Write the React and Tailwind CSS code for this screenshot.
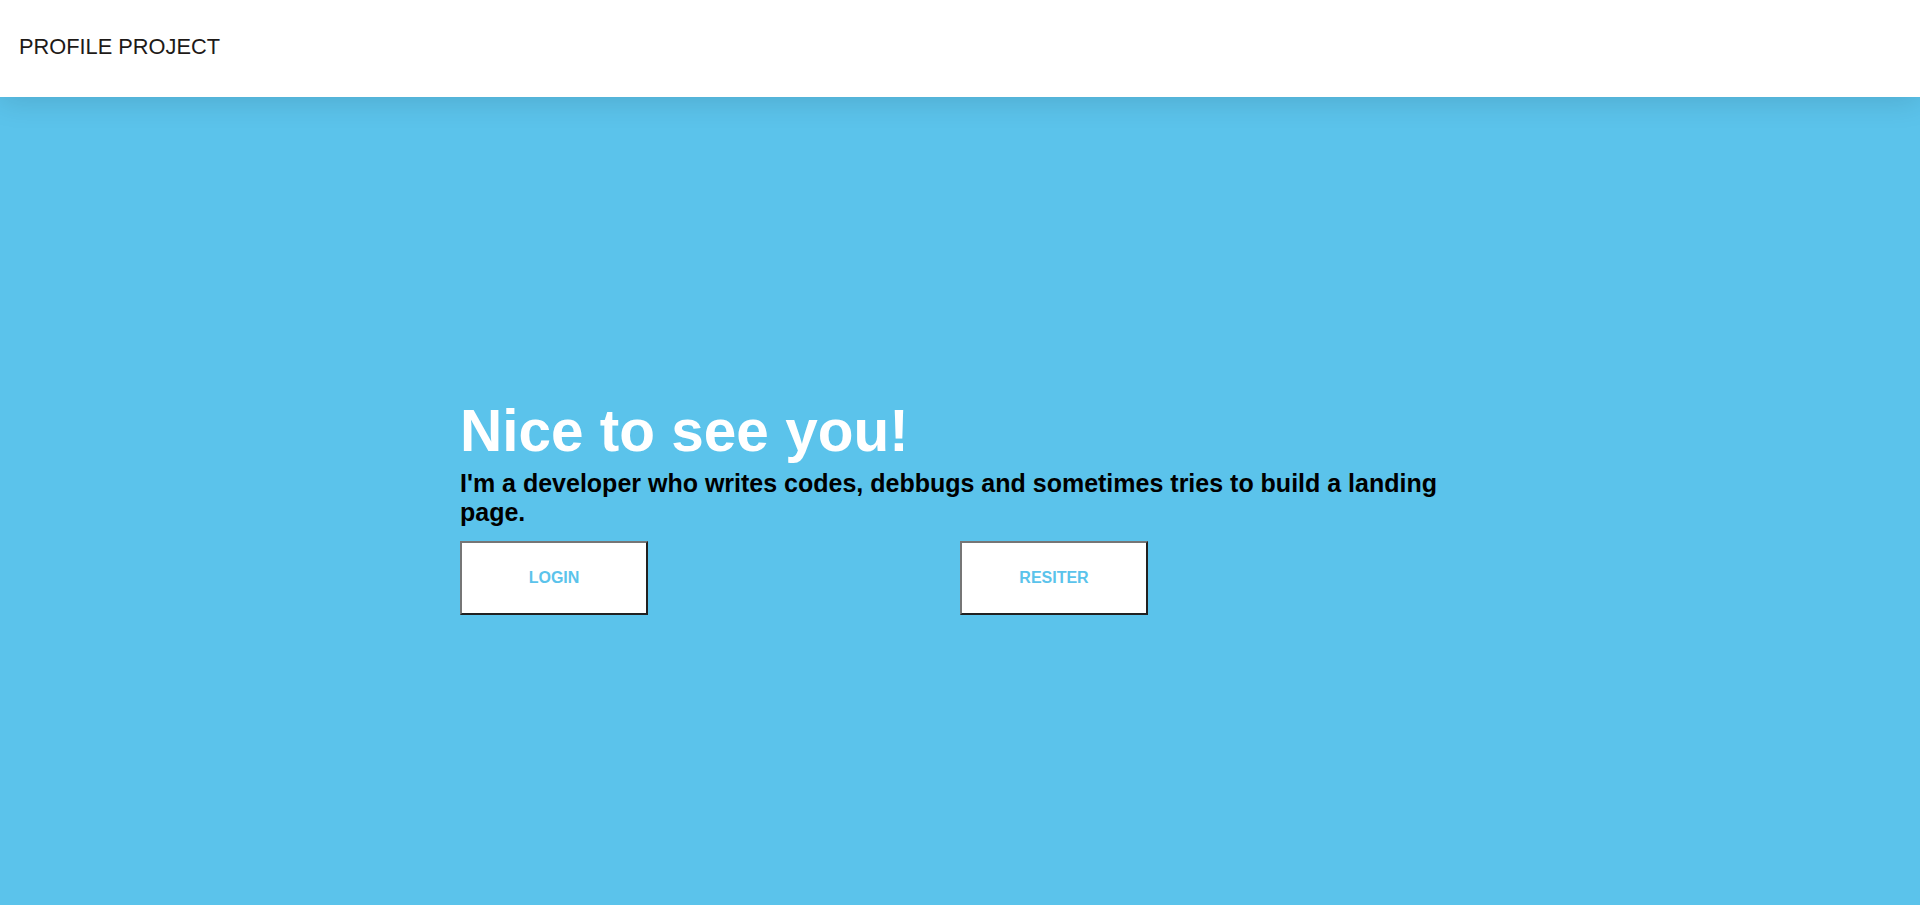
import React from 'react';

export default function App() {
    return (
        <div className="min-h-screen flex flex-col bg-[#5bc3eb] font-['Liberation_Sans',Arial,sans-serif]">
            {/* Top bar */}
            <header className="relative z-10 h-[97px] shrink-0 flex items-center bg-white pl-[19px] pb-[2px] shadow-[0_4px_28px_rgba(0,0,0,0.13)]">
                <h1 className="text-[21.8px] leading-normal text-[#1e1a18]">PROFILE PROJECT</h1>
            </header>

            {/* Hero */}
            <main className="flex-1 flex flex-col justify-center items-center pt-[9px]">
                <div className="w-[1000px]">
                    <h2 className="text-[58.5px] leading-[69.6px] font-bold text-white">Nice to see you!</h2>
                    <p className="mt-[3px] text-[25px] leading-[29.4px] font-bold text-black">
                        I'm a developer who writes codes, debbugs and sometimes tries to build a landing page.
                    </p>
                    <div className="mt-[13px] grid grid-cols-2">
                        <div>
                            <button className="w-[188px] h-[74px] bg-white border-2 border-t-[#767676] border-l-[#767676] border-b-[#212121] border-r-[#212121] text-[16px] font-bold text-[#5bc3eb]">
                                LOGIN
                            </button>
                        </div>
                        <div>
                            <button className="w-[188px] h-[74px] bg-white border-2 border-t-[#767676] border-l-[#767676] border-b-[#212121] border-r-[#212121] text-[16px] font-bold text-[#5bc3eb]">
                                RESITER
                            </button>
                        </div>
                    </div>
                </div>
            </main>
        </div>
    );
}
